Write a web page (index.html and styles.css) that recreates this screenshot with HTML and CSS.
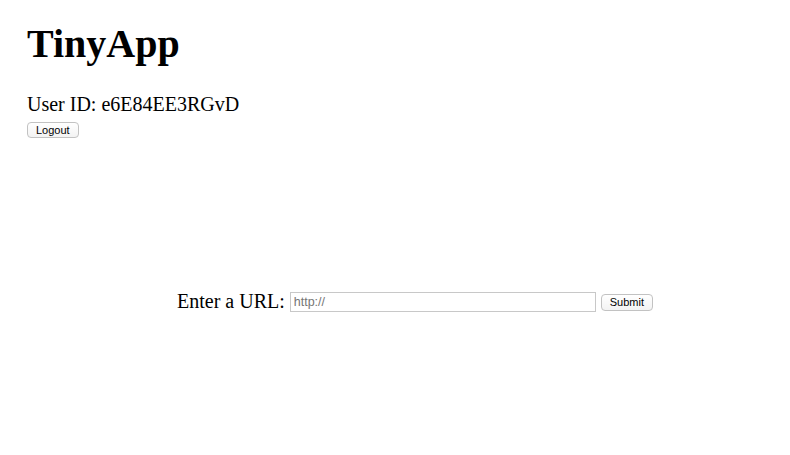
FILE: index.html
```html
<!DOCTYPE html>
<html>
<head>
<meta charset="utf-8">
<title>TinyApp</title>
<link rel="stylesheet" href="styles.css">
</head>
<body>
<div class="page">
  <header class="header">
    <h1 class="title">TinyApp</h1>
    <div class="user">User ID: e6E84EE3RGvD</div>
    <form class="logout-form">
      <button type="button" class="btn">Logout</button>
    </form>
  </header>
  <main class="main">
    <form class="url-form">
      <label class="url-label" for="longURL">Enter a URL:</label>
      <input class="url-input" id="longURL" type="text" placeholder="http://">
      <button type="button" class="btn btn-submit">Submit</button>
    </form>
  </main>
</div>
</body>
</html>
```

FILE: styles.css
```css
html, body {
  margin: 0;
  padding: 0;
  background: #ffffff;
}

.page {
  padding: 22px 27px 0 27px;
  font-family: "Liberation Serif", "Times New Roman", serif;
  color: #000;
}

.title {
  margin: 0;
  font-size: 40px;
  font-weight: bold;
  line-height: 44px;
}

.user {
  margin-top: 27px;
  font-size: 20px;
  line-height: 22px;
}

.logout-form {
  margin: 5px 0 0 0;
}

.btn {
  font-family: "Liberation Sans", Arial, sans-serif;
  font-size: 11px;
  color: #000;
  background: linear-gradient(#ffffff, #f3f3f3);
  border: 1px solid #c2c2c2;
  border-radius: 4px;
  padding: 0 8px;
  height: 16px;
  line-height: 14px;
  margin: 0;
}

.btn-submit {
  height: 17px;
  line-height: 15px;
}

.main {
  margin-top: 153px;
  padding-left: 40px;
}

.url-form {
  display: flex;
  justify-content: center;
  align-items: center;
  gap: 5px;
  font-size: 20px;
}

.url-label {
  font-size: 20px;
  line-height: 22px;
  position: relative;
  top: -1px;
}

.url-input {
  width: 306px;
  height: 20px;
  box-sizing: border-box;
  border: 1px solid #c8c8c8;
  padding: 0 3px;
  font-family: "Liberation Sans", Arial, sans-serif;
  font-size: 12.5px;
  margin: 0;
}

.url-input::placeholder {
  color: #757575;
}
```
